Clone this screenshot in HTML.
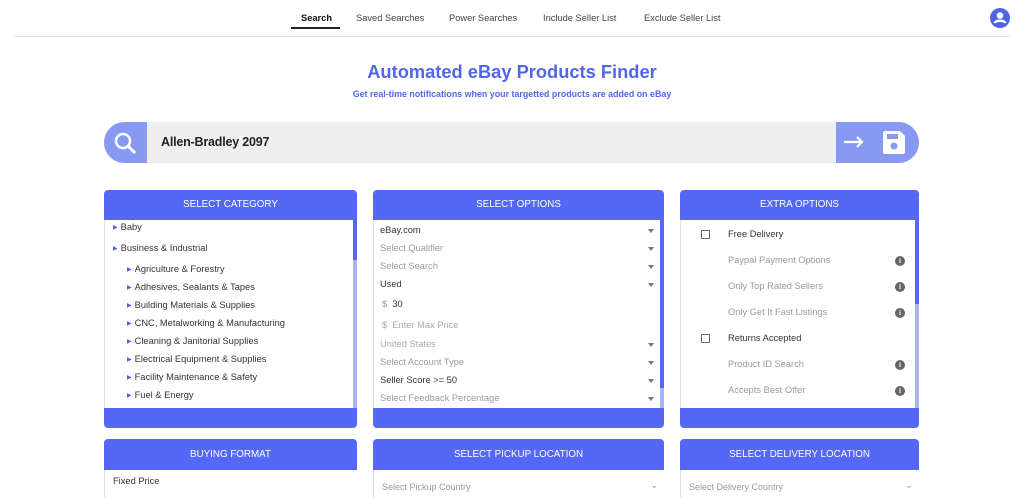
<!DOCTYPE html>
<html><head><meta charset="utf-8"><style>
*{box-sizing:border-box;margin:0;padding:0}
html,body{width:1024px;height:498px;overflow:hidden}
body{background:#fff;font-family:"Liberation Sans",sans-serif;color:#333;position:relative}
.abs{position:absolute}
.nav{top:13px;font-size:9.3px;color:#444}
.panel{position:absolute;border-radius:4px;overflow:hidden;background:#5468f5}
.ph{height:30px;color:#fff;font-size:9.8px;text-align:center;line-height:30px}
.pb{position:absolute;left:0;right:0;top:30px;background:#fff;border-left:1px solid #dde;}
.row{position:absolute;font-size:9.3px;color:#333;white-space:nowrap}
.tri{color:#4a60e8;font-size:6px;margin-right:3px;vertical-align:1px}
.sel{position:absolute;left:6px;right:6px;font-size:9.3px;white-space:nowrap}
.sel:after{content:"";position:absolute;right:0;top:4px;border-left:3.5px solid transparent;border-right:3.5px solid transparent;border-top:4px solid #777}
.g{color:#9a9a9a}
.cb{position:absolute;left:20px;width:9px;height:9px;border:1px solid #666;border-radius:1px}
.info{position:absolute;right:10px;width:10px;height:10px;border-radius:50%;background:#666;color:#fff;font-size:7px;text-align:center;line-height:10px;font-weight:bold;font-family:"Liberation Serif",serif}
</style></head><body>
<div class="abs nav" style="left:301px;color:#111;font-weight:bold">Search</div>
<div class="abs" style="left:291px;top:27px;width:49px;height:2px;background:#222"></div>
<div class="abs nav" style="left:356px">Saved Searches</div>
<div class="abs nav" style="left:449px">Power Searches</div>
<div class="abs nav" style="left:543px">Include Seller List</div>
<div class="abs nav" style="left:644px">Exclude Seller List</div>
<div class="abs" style="left:14px;top:36px;width:996px;height:1px;background:#e4e4e4"></div>
<svg class="abs" style="left:990px;top:8px" width="20" height="20" viewBox="0 0 20 20"><circle cx="10" cy="10" r="10" fill="#4f63e6"/><circle cx="10" cy="7.5" r="3.3" fill="#fff"/><path d="M4.5 15c1.5-3 9.5-3 11 0" stroke="#fff" stroke-width="2.4" fill="none"/></svg>

<div class="abs" style="left:0;width:1024px;top:61px;text-align:center;font-size:18.3px;font-weight:bold;color:#5266ea">Automated eBay Products Finder</div>
<div class="abs" style="left:0;width:1024px;top:89px;text-align:center;font-size:8.9px;font-weight:bold;color:#5266ea">Get real-time notifications when your targetted products are added on eBay</div>

<div class="abs" style="left:104px;top:122px;width:815px;height:41px;border-radius:21px;overflow:hidden;background:#efefef">
 <div class="abs" style="left:0;top:0;width:43px;height:41px;background:#8899f3"></div>
 <svg class="abs" style="left:9px;top:9px" width="24" height="24" viewBox="0 0 24 24"><circle cx="10" cy="10" r="7" stroke="#fff" stroke-width="2.5" fill="none"/><path d="M15 15l7 7" stroke="#fff" stroke-width="3"/></svg>
 <div class="abs" style="left:57px;top:13px;font-size:12.5px;color:#222;font-weight:bold;letter-spacing:-0.2px">Allen-Bradley 2097</div>
 <div class="abs" style="left:732px;top:0;width:83px;height:41px;background:#8899f3"></div>
 <svg class="abs" style="left:738px;top:12px" width="24" height="16" viewBox="0 0 24 16"><path d="M2 8h18M15 3l5 5-5 5" stroke="#fff" stroke-width="2.2" fill="none"/></svg>
 <svg class="abs" style="left:778px;top:8px" width="24" height="25" viewBox="0 0 24 25"><path d="M1 3a2 2 0 0 1 2-2h15l5 5v16a2 2 0 0 1-2 2H3a2 2 0 0 1-2-2z" fill="#fff"/><rect x="5" y="4" width="11" height="5" fill="#8899f3"/><circle cx="12" cy="16" r="3.5" fill="#8899f3"/></svg>
</div>

<div class="panel" style="left:104px;top:190px;width:253px;height:238px">
 <div class="ph">SELECT CATEGORY</div>
 <div class="pb" style="height:188px">
  <div class="abs" style="right:0;top:0;width:4px;height:188px;background:#a9b4f6"></div>
  <div class="abs" style="right:0;top:0;width:4px;height:40px;background:#5468f5"></div>
  <div class="row" style="left:8px;top:2px"><span class="tri">▶</span>Baby</div>
  <div class="row" style="left:8px;top:23px"><span class="tri">▶</span>Business &amp; Industrial</div>
  <div class="row" style="left:22px;top:44px"><span class="tri">▶</span>Agriculture &amp; Forestry</div>
  <div class="row" style="left:22px;top:62px"><span class="tri">▶</span>Adhesives, Sealants &amp; Tapes</div>
  <div class="row" style="left:22px;top:80px"><span class="tri">▶</span>Building Materials &amp; Supplies</div>
  <div class="row" style="left:22px;top:98px"><span class="tri">▶</span>CNC, Metalworking &amp; Manufacturing</div>
  <div class="row" style="left:22px;top:116px"><span class="tri">▶</span>Cleaning &amp; Janitorial Supplies</div>
  <div class="row" style="left:22px;top:134px"><span class="tri">▶</span>Electrical Equipment &amp; Supplies</div>
  <div class="row" style="left:22px;top:152px"><span class="tri">▶</span>Facility Maintenance &amp; Safety</div>
  <div class="row" style="left:22px;top:170px"><span class="tri">▶</span>Fuel &amp; Energy</div>
 </div>
</div>

<div class="panel" style="left:373px;top:190px;width:291px;height:238px">
 <div class="ph">SELECT OPTIONS</div>
 <div class="pb" style="height:188px">
  <div class="abs" style="right:0;top:0;width:4px;height:188px;background:#a9b4f6"></div>
  <div class="abs" style="right:0;top:0;width:4px;height:168px;background:#5468f5"></div>
  <div style="position:absolute;left:0;right:4px;top:0;bottom:0">
  <div class="sel" style="top:5px">eBay.com</div>
  <div class="sel g" style="top:23px">Select Qualifier</div>
  <div class="sel g" style="top:41px">Select Search</div>
  <div class="sel" style="top:59px">Used</div>
  <div class="row" style="left:8px;top:79px"><span class="g">$</span>&nbsp; 30</div>
  <div class="row g" style="left:8px;top:100px;color:#aaa">$&nbsp; Enter Max Price</div>
  <div class="sel" style="top:119px;color:#aaa">United States</div>
  <div class="sel g" style="top:137px">Select Account Type</div>
  <div class="sel" style="top:155px">Seller Score &gt;= 50</div>
  <div class="sel g" style="top:173px">Select Feedback Percentage</div>
  </div>
 </div>
</div>

<div class="panel" style="left:680px;top:190px;width:239px;height:238px">
 <div class="ph">EXTRA OPTIONS</div>
 <div class="pb" style="height:188px">
  <div class="abs" style="right:0;top:0;width:4px;height:188px;background:#a9b4f6"></div>
  <div class="abs" style="right:0;top:0;width:4px;height:84px;background:#5468f5"></div>
  <div style="position:absolute;left:0;right:4px;top:0;bottom:0">
  <div class="cb" style="top:10px"></div><div class="row" style="left:47px;top:9px">Free Delivery</div>
  <div class="row g" style="left:47px;top:35px">Paypal Payment Options</div><div class="info" style="top:36px">i</div>
  <div class="row g" style="left:47px;top:61px">Only Top Rated Sellers</div><div class="info" style="top:62px">i</div>
  <div class="row g" style="left:47px;top:87px">Only Get It Fast Listings</div><div class="info" style="top:88px">i</div>
  <div class="cb" style="top:114px"></div><div class="row" style="left:47px;top:113px">Returns Accepted</div>
  <div class="row g" style="left:47px;top:139px">Product ID Search</div><div class="info" style="top:140px">i</div>
  <div class="row g" style="left:47px;top:165px">Accepts Best Offer</div><div class="info" style="top:166px">i</div>
  </div>
 </div>
</div>

<div class="panel" style="left:104px;top:439px;width:253px;height:70px">
 <div class="ph" style="height:31px;line-height:31px">BUYING FORMAT</div>
 <div class="pb" style="top:31px;height:40px"><div class="row" style="left:8px;top:6px">Fixed Price</div></div>
</div>
<div class="panel" style="left:373px;top:439px;width:291px;height:70px">
 <div class="ph" style="height:31px;line-height:31px">SELECT PICKUP LOCATION</div>
 <div class="pb" style="top:31px;height:40px"><div class="row g" style="left:8px;top:12px;font-size:9px">Select Pickup Country</div><div class="row g" style="right:6px;top:10px">⌄</div></div>
</div>
<div class="panel" style="left:680px;top:439px;width:239px;height:70px">
 <div class="ph" style="height:31px;line-height:31px">SELECT DELIVERY LOCATION</div>
 <div class="pb" style="top:31px;height:40px"><div class="row g" style="left:8px;top:12px;font-size:9px">Select Delivery Country</div><div class="row g" style="right:6px;top:10px">⌄</div></div>
</div>
</body></html>
